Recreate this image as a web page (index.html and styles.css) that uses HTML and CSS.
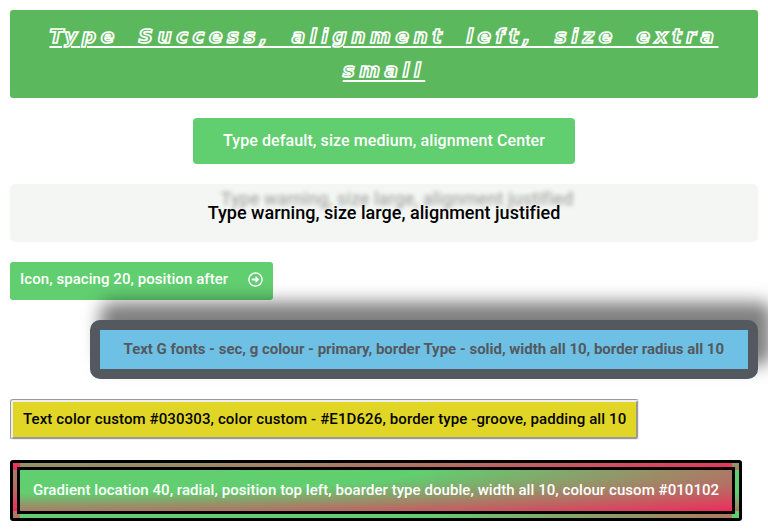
FILE: index.html
```html
<!DOCTYPE html>
<html lang="en">
<head>
<meta charset="utf-8">
<title>Buttons</title>
<link rel="stylesheet" href="styles.css">
</head>
<body>
<main class="stack">
  <a class="btn btn-success"><span>Type Success, alignment left, size extra small</span></a>
  <a class="btn btn-default">Type default, size medium, alignment Center</a>
  <a class="btn btn-warning">Type warning, size large, alignment justified</a>
  <a class="btn btn-icon"><span>Icon, spacing 20, position after</span>
    <svg class="icon" viewBox="0 0 512 512"><path d="M504 256C504 119 393 8 256 8S8 119 8 256s111 248 248 248 248-111 248-248zm-448 0c0-110.500 89.500-200 200-200s200 89.500 200 200-89.500 200-200 200S56 366.500 56 256zm72 20v-40c0-6.600 5.400-12 12-12h116v-67c0-10.700 12.900-16 20.500-8.500l99 99c4.700 4.700 4.700 12.300 0 17l-99 99c-7.600 7.600-20.500 2.200-20.500-8.500v-67H140c-6.600 0-12-5.400-12-12z"/></svg>
  </a>
  <a class="btn btn-solid">Text G fonts - sec, g colour - primary, border Type - solid, width all 10, border radius all 10</a>
  <a class="btn btn-groove">Text color custom #030303, color custom - #E1D626, border type -groove, padding all 10</a>
  <a class="btn btn-gradient">Gradient location 40, radial, position top left, boarder type double, width all 10, colour cusom #010102</a>
</main>
</body>
</html>
```
FILE: styles.css
```css
* { box-sizing: border-box; }
body { margin: 0; overflow: hidden; background: #fff; font-family: Roboto, sans-serif; }
.stack { display: flex; flex-direction: column; align-items: flex-start; gap: 20px; padding: 10px; }
.btn { display: block; border-radius: 3px; font-size: 15px; font-weight: 500; line-height: 15px; letter-spacing: 0.06px; color: #fff; text-align: center; white-space: nowrap; background: #61ce70; }
.btn-success { align-self: stretch; height: 88px; padding: 9px 20px; white-space: normal; background: #5cb85c; color: #5cb85c; font-family: "DejaVu Sans", sans-serif; font-size: 20px; font-weight: 700; font-style: italic; line-height: 34px; letter-spacing: 4.5px; word-spacing: 8.4px; -webkit-text-stroke: 1.7px #fff; text-decoration: underline #fff 2px; text-underline-offset: 3px; }
.btn-default { align-self: center; height: 46px; padding: 15px 30px; font-size: 16px; line-height: 16px; letter-spacing: 0.093px; border-radius: 4px; }
.btn-warning { align-self: stretch; height: 58px; padding: 20px 40px; font-size: 18px; line-height: 18px; letter-spacing: 0.02px; border-radius: 5px; background: #f4f6f4; color: #000; text-shadow: 13px -14px 4px rgba(0,0,0,.3); }
.btn-icon { display: flex; gap: 20px; height: 38px; padding: 10px; }
.icon { width: 15px; height: 15px; fill: currentColor; }
.btn-solid { align-self: flex-end; height: 59px; padding: 12px 24px; border: 10px solid #54595f; border-radius: 10px; background: #6ec1e4; color: #54595f; font-weight: 700; letter-spacing: -0.021px; box-shadow: 12px -16px 17px 2px rgba(0,0,0,.5); }
.btn-groove { height: 41px; padding: 10px; border: 3px groove #eee; background: #e1d626; color: #030303; letter-spacing: 0.116px; }
.btn-gradient { height: 61px; padding: 13px; border: 10px double #010102; background: radial-gradient(at top left, #61ce70 40%, #f2295b 100%); }
```
